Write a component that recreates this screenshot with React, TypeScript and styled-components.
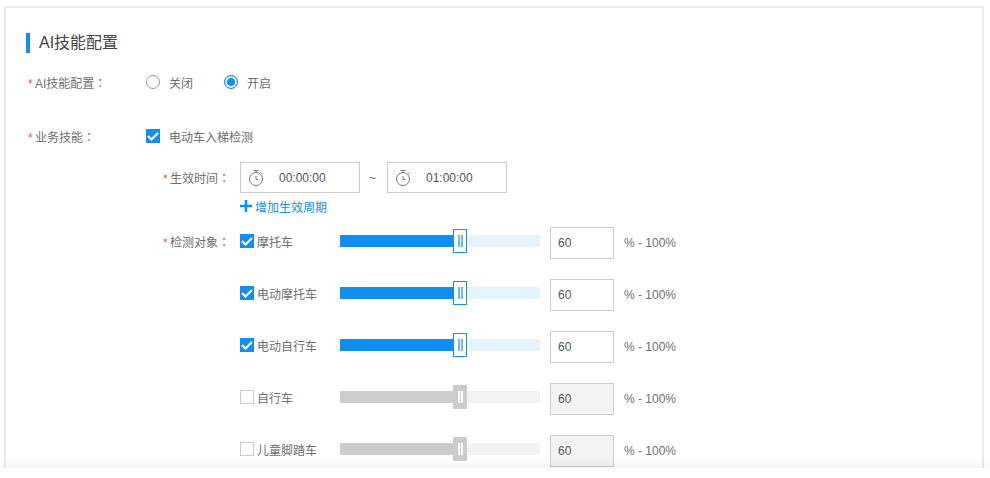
import React from 'react';
import styled, { createGlobalStyle } from 'styled-components';

const GlobalStyle = createGlobalStyle`
  html, body {
    margin: 0;
    height: 100%;
    overflow: hidden;
    background: #fff;
  }

  body {
    font-family: "Liberation Sans", "Noto Sans CJK SC", sans-serif;
    font-size: 12px;
    color: #6e6e6e;
  }
`;

const Page = styled.div`
  position: relative;
  width: 990px;
  height: 478px;
  overflow: hidden;
`;

const Panel = styled.div`
  box-sizing: border-box;
  width: 980px;
  height: 600px;
  margin: 6px 0 0 4px;
  border: 2px solid #ebebeb;
  padding: 25px 0 0 20px;
`;

const SectionTitle = styled.h2`
  margin: 0;
  height: 20px;
  border-left: 4px solid #118eef;
  padding-left: 9px;
  font-size: 16px;
  font-weight: 400;
  line-height: 20px;
  color: #444;
`;

const FormRow = styled.div<{ $top: number }>`
  display: flex;
  align-items: center;
  height: 20px;
  margin: ${p => p.$top}px 0 0 2px;
`;

const Label = styled.div<{ $width: number; $inset?: number }>`
  flex: none;
  box-sizing: border-box;
  width: ${p => p.$width}px;
  padding-left: ${p => p.$inset ?? 0}px;
  white-space: nowrap;
`;

const ObjectLabel = styled(Label)`
  margin-top: -4px;
`;

const Star = styled.span`
  display: inline-block;
  width: 7px;
  color: #e5566f;
`;

const Colon = styled.span`
  font-family: "Noto Sans CJK TC", sans-serif;
`;

const RadioGroup = styled.label`
  display: flex;
  align-items: center;
  margin-right: 31px;
`;

const RadioDot = styled.span<{ $on?: boolean }>`
  box-sizing: border-box;
  display: block;
  width: 14px;
  height: 14px;
  margin-right: 9px;
  border: 1px solid ${p => (p.$on ? '#118eef' : '#999')};
  border-radius: 50%;
  background: ${p => (p.$on ? '#118eef' : '#fff')};
  box-shadow: ${p => (p.$on ? 'inset 0 0 0 2px #fff' : 'none')};
`;

const Box = styled.span<{ $on?: boolean }>`
  flex: none;
  box-sizing: border-box;
  display: flex;
  align-items: center;
  justify-content: center;
  width: 14px;
  height: 14px;
  border: 1px solid ${p => (p.$on ? '#118eef' : '#ccc')};
  background: ${p => (p.$on ? '#118eef' : '#fff')};
`;

const CheckText = styled.span`
  margin-left: 9px;
`;

const SubForm = styled.div`
  margin-left: 120px;
`;

const TimeRow = styled.div`
  display: flex;
  align-items: center;
  margin-top: 16px;
`;

const TimeInput = styled.div`
  box-sizing: border-box;
  display: flex;
  align-items: center;
  width: 120px;
  height: 31px;
  border: 1px solid #ccc;
  padding-left: 7px;
  color: #555;

  svg {
    margin-right: 15px;
  }
`;

const Tilde = styled.span`
  width: 25px;
  margin-right: 2px;
  text-align: center;
`;

const AddLink = styled.a`
  display: flex;
  align-items: center;
  height: 20px;
  margin: 3px 0 0 94px;
  color: #1a8ce8;

  svg {
    margin-right: 3px;
  }
`;

const ObjectList = styled.div`
  display: flex;
  flex-direction: column;
  gap: 20px;
  margin-top: 11px;
`;

const ObjectRow = styled.div`
  display: flex;
  align-items: center;
  height: 32px;
`;

const ObjectName = styled.div`
  display: flex;
  align-items: center;
  flex: none;
  width: 100px;
  margin-top: -4px;

  span + span {
    margin-left: 3px;
  }
`;

const Track = styled.div<{ $off?: boolean }>`
  position: relative;
  flex: none;
  width: 200px;
  height: 12px;
  margin-top: -4px;
  background: ${p => (p.$off ? '#f3f3f3' : '#e6f3fd')};
`;

const Fill = styled.div<{ $off?: boolean }>`
  height: 100%;
  background: ${p => (p.$off ? '#ccc' : '#118eef')};
`;

const Handle = styled.div<{ $off?: boolean }>`
  position: absolute;
  top: -6px;
  box-sizing: border-box;
  display: flex;
  justify-content: center;
  align-items: center;
  gap: 1px;
  width: 14px;
  height: 24px;
  margin-left: -7px;
  border: 1px solid ${p => (p.$off ? '#ccc' : '#118eef')};
  background: ${p => (p.$off ? '#ccc' : '#fff')};

  i {
    display: block;
    width: 2px;
    height: 12px;
    background: ${p => (p.$off ? '#fff' : '#6db9f5')};
  }
`;

const Value = styled.div<{ $off?: boolean }>`
  flex: none;
  box-sizing: border-box;
  width: 64px;
  height: 32px;
  margin-left: 10px;
  border: 1px solid #ccc;
  padding-left: 7px;
  line-height: 30px;
  color: #555;
  background: ${p => (p.$off ? '#f3f3f3' : '#fff')};
`;

const Suffix = styled.span`
  margin-left: 10px;
`;

const Footer = styled.div`
  position: absolute;
  left: 0;
  right: 0;
  bottom: 0;
  height: 10px;
  background: #fff;
  box-shadow: 0 -2px 8px rgba(0, 0, 0, 0.07);
`;

const TimerIcon = () => (
  <svg width="16" height="18" viewBox="0 0 16 18" fill="none" stroke="#777" strokeWidth="1">
    <circle cx="8" cy="10" r="6.5" />
    <path d="M5.5 1.5h5M8 1.5v2M13 3.5l1.5 1.5M8 7v3.5h2.5" />
  </svg>
);

const PlusIcon = () => (
  <svg width="12" height="12" viewBox="0 0 12 12" fill="#118eef">
    <path d="M4.75 0h2.5v4.75H12v2.5H7.25V12h-2.5V7.25H0v-2.5h4.75z" />
  </svg>
);

const CheckIcon = () => (
  <svg width="12" height="12" viewBox="0 0 12 12" fill="none" stroke="#fff" strokeWidth="2.2">
    <path d="M1 6l3.5 3.5L11 3" />
  </svg>
);

const RequiredLabel = ({ text, width, inset }: { text: string; width: number; inset?: number }) => (
  <Label $width={width} $inset={inset}>
    <Star>*</Star>
    {text}
    <Colon>：</Colon>
  </Label>
);

const objects = [
  { name: '摩托车', on: true },
  { name: '电动摩托车', on: true },
  { name: '电动自行车', on: true },
  { name: '自行车', on: false },
  { name: '儿童脚踏车', on: false },
];

const percent = 60;

export default function App() {
  return (
    <Page>
      <GlobalStyle />
      <Panel>
        <SectionTitle>AI技能配置</SectionTitle>
        <FormRow $top={19}>
          <RequiredLabel text="AI技能配置" width={118} />
          <RadioGroup>
            <RadioDot />
            关闭
          </RadioGroup>
          <RadioGroup>
            <RadioDot $on />
            开启
          </RadioGroup>
        </FormRow>
        <FormRow $top={34}>
          <RequiredLabel text="业务技能" width={118} />
          <Box $on>
            <CheckIcon />
          </Box>
          <CheckText>电动车入梯检测</CheckText>
        </FormRow>
        <SubForm>
          <TimeRow>
            <RequiredLabel text="生效时间" width={94} inset={17} />
            <TimeInput>
              <TimerIcon />
              00:00:00
            </TimeInput>
            <Tilde>~</Tilde>
            <TimeInput>
              <TimerIcon />
              01:00:00
            </TimeInput>
          </TimeRow>
          <AddLink>
            <PlusIcon />
            增加生效周期
          </AddLink>
          <ObjectList>
            {objects.map((item, i) => (
              <ObjectRow key={item.name}>
                <ObjectLabel $width={94} $inset={17}>
                  {i === 0 && (
                    <>
                      <Star>*</Star>
                      检测对象
                      <Colon>：</Colon>
                    </>
                  )}
                </ObjectLabel>
                <ObjectName>
                  <Box $on={item.on}>{item.on && <CheckIcon />}</Box>
                  <span>{item.name}</span>
                </ObjectName>
                <Track $off={!item.on}>
                  <Fill $off={!item.on} style={{ width: `${percent}%` }} />
                  <Handle $off={!item.on} style={{ left: `${percent}%` }}>
                    <i />
                    <i />
                  </Handle>
                </Track>
                <Value $off={!item.on}>{percent}</Value>
                <Suffix>% - 100%</Suffix>
              </ObjectRow>
            ))}
          </ObjectList>
        </SubForm>
      </Panel>
      <Footer />
    </Page>
  );
}
